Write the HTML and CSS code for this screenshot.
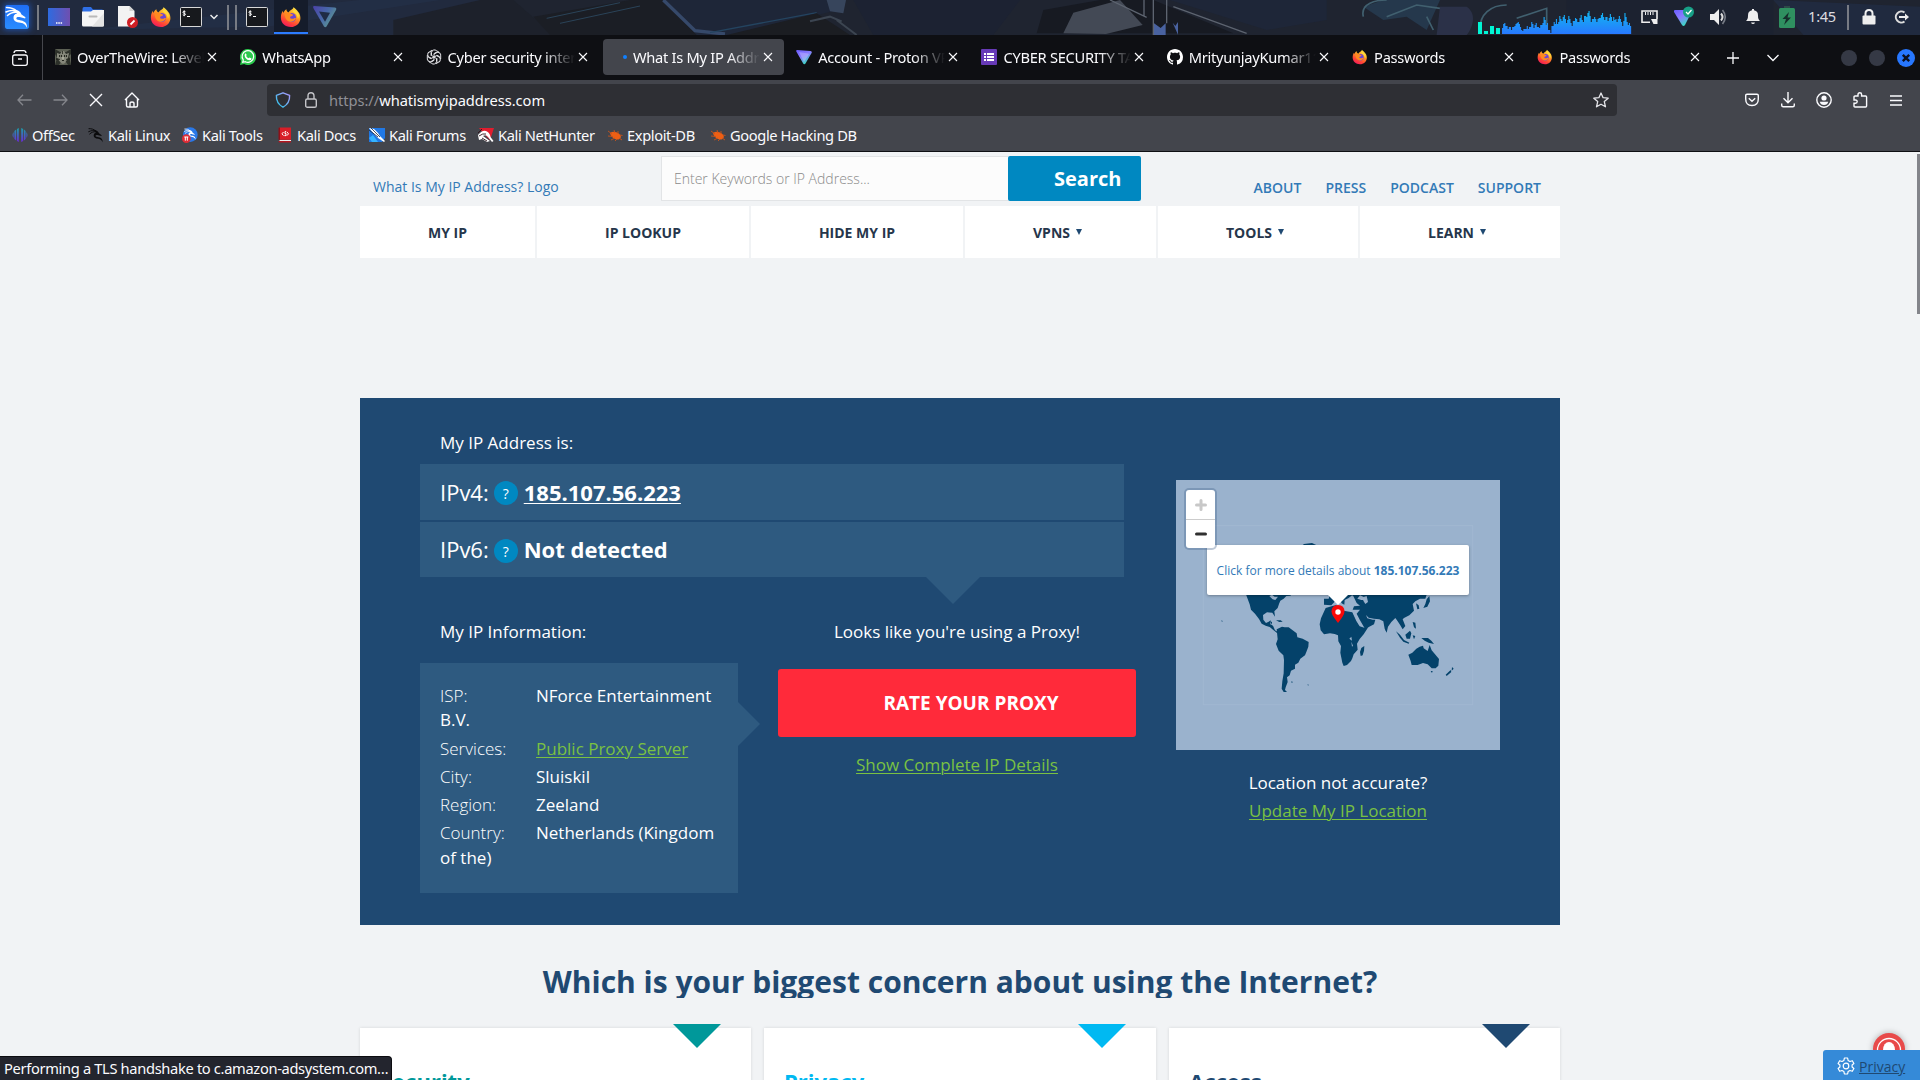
FILE: index.html
```html
<!DOCTYPE html>
<html lang="en">
<head>
<meta charset="utf-8">
<title>What Is My IP Address</title>
<link rel="stylesheet" href="styles.css">
</head>
<body>
<svg class="defs" width="0" height="0" aria-hidden="true">
  <defs>
    <linearGradient id="g-fire" x1="0.8" y1="0" x2="0.3" y2="1"><stop offset="0" stop-color="#fff04a"/><stop offset=".4" stop-color="#ff9a22"/><stop offset=".75" stop-color="#ff4436"/><stop offset="1" stop-color="#f0185e"/></linearGradient>
    <linearGradient id="g-proton" x1="0" y1="0" x2="0.6" y2="1"><stop offset="0" stop-color="#6a5cff"/><stop offset=".5" stop-color="#8a7bff"/><stop offset="1" stop-color="#35e0c0"/></linearGradient>
    <linearGradient id="g-protondim" x1="0" y1="0" x2="1" y2="0.6"><stop offset="0" stop-color="#4b41a8"/><stop offset=".55" stop-color="#4868a8"/><stop offset="1" stop-color="#5f9a90"/></linearGradient>
    <linearGradient id="g-desk" x1="0" y1="0" x2="1" y2="0"><stop offset="0" stop-color="#2e6be0"/><stop offset="1" stop-color="#6f4fb0"/></linearGradient>
    <linearGradient id="g-kali" x1="0" y1="0" x2="0" y2="1"><stop offset="0" stop-color="#1f6ef5"/><stop offset="1" stop-color="#2a8cff"/></linearGradient>
    <linearGradient id="g-shield" x1="0" y1="1" x2="1" y2="0"><stop offset="0" stop-color="#25c8e8"/><stop offset="1" stop-color="#b098ff"/></linearGradient>
    <linearGradient id="g-net" x1="0" y1="0" x2="0" y2="1"><stop offset="0" stop-color="#10b8f0"/><stop offset="1" stop-color="#2878ff"/></linearGradient>
    <linearGradient id="g-off" x1="0" y1="0" x2="0" y2="1"><stop offset="0" stop-color="#1aa0a8"/><stop offset="1" stop-color="#6a28d8"/></linearGradient>
  </defs>
  <symbol id="firefox" viewBox="0 0 24 24">
    <path fill="url(#g-fire)" d="M15 1c1 2 4 3 6 7 4 8-2 15-9 15C5 23 .5 18 1 12c.1-3 1-5 2-6.500l1 2C4.500 5 6 4 7 3.500c0 2 1 3 2.500 3.500C11 4 14 4 15 1z"/>
    <circle cx="12.500" cy="12.500" r="5" fill="#6a45d8"/>
    <path fill="#ff8a20" d="M5 9c2-2 5-2.500 7-.5l2.500 1c-.5 1.600-2 1.500-3 2-1 .8-.5 2.500 1.500 2.500 2 .2 2.500-1 4.500-.8-1 3-3.500 4-5.500 4-4 0-6.500-3-7-8.200z"/>
    <path fill="#ffd83a" d="M16 2c0 3 4 4 4.500 8 .3 2-.5 3-1 4-.5-4-2-6-6-8 1.500-.6 2.300-2 2.500-4z"/>
  </symbol>
  <symbol id="dragon" viewBox="0 0 24 24">
    <path fill="none" stroke="currentColor" stroke-width="1.500" stroke-linecap="round" stroke-linejoin="round" d="M1.500 2.500c4 0 7 .6 10 3.500M1 7c4-2 7-2 10-.8M2.500 10.500c3-3 6-3.500 9-3.300"/>
    <path fill="currentColor" d="M9 4.500c4 .2 6.500 2 7.500 5l4 2.800-.4 1.200-4.600-1.200c-2-.6-4-.4-4.200 1 0 1.600 2 1.700 4.800 2.200 4 .8 6 3 6 7.500-1.300-3-3-4.800-6.700-5.300-4.500-.5-7-1.800-6.900-5C8.600 10.500 9.500 9 12 8.600 11 7 10 6.500 9 4.500z"/>
  </symbol>
  <symbol id="terminal" viewBox="0 0 22 20">
    <rect x=".5" y=".5" width="21" height="19" rx="1" fill="#17191d" stroke="#d8d8d8"/>
    <path d="M5.500 4.800c-.8-.8-2.600-.6-2.600.5 0 1.200 2.600.8 2.600 2 0 1.100-1.900 1.300-2.700.5M4.200 3.400v5.800M7 9.500h3" fill="none" stroke="#fff" stroke-width="1"/>
  </symbol>
  <symbol id="close" viewBox="0 0 10 10"><path d="M1 1l8 8M9 1L1 9" stroke="currentColor" stroke-width="1.100" fill="none"/></symbol>
  <symbol id="beetle" viewBox="0 0 16 16">
    <path fill="#ee5f14" d="M3 6c3-2 8-1.500 10.500 2.500 1 2-.5 4-3 4C7 12.500 4 10 3 6z"/>
    <path d="M1 4l4 3M1 9l5 .5M4 13l4-2M8 14l2-2M7 3l1 3M11 4l0 3M13 8l2.500.5M12 11l3 2" stroke="#c8541a" stroke-width=".9" fill="none"/>
  </symbol>
  <symbol id="proton" viewBox="0 0 16 16">
    <path fill="url(#g-proton)" d="M1.200 1l13.200 1c1.400.1 1.600 1.200 1.200 2L9.500 14.600c-.6 1-1.800 1-2.300 0L.3 2.500C-.1 1.600.3 1 1.200 1z"/>
    <path fill="#d8d4ff" d="M3 3l9 1.500c1 .2 1 1 .6 1.600L8 13 3 3z" opacity=".35"/>
  </symbol>
</svg>

<header class="panel">
  <svg class="wallpaper" viewBox="0 0 5760 105" preserveAspectRatio="none" aria-hidden="true">
    <rect width="5760" height="105" fill="#1f2430"/>
    <path fill="#212a3e" d="M0 0h1500l170 105H0z"/>
    <path fill="#243049" d="M250 90L1080 0h240L800 80z" opacity=".7"/>
    <path fill="#1d212b" d="M1180 60L1440 0h100l120 105h-480z"/>
    <path fill="#1b1e25" d="M1600 50L1890 0h110l110 105h-460z"/>
    <path fill="none" stroke="#2a4358" stroke-width="3" d="M1640 55L1860 8M1680 70l240-52"/>
    <path fill="#1e2638" d="M1990 0h520v30l-280 75h-140z"/>
    <path fill="none" stroke="#36496a" stroke-width="10" d="M1990 0l95 92 90 10"/>
    <path fill="none" stroke="#244460" stroke-width="4" d="M2130 98L2450 38"/>
    <path fill="#1b1d22" d="M2180 105l270-65 100 65z"/>
    <path fill="#37455c" d="M2480 0h58l-8 40-40-6z"/>
    <path fill="none" stroke="#3c4551" stroke-width="6" d="M2430 64l60-14 35 14M2510 60l60 45"/>
    <path fill="#1c2232" d="M2560 0h500l-80 105h-360z"/>
    <path fill="#171a22" d="M3130 30l170-30h160l240 100H3110z"/>
    <path fill="#434955" d="M3200 100l30-62L3370 0l68 75-110 27z" transform="translate(-10 0)"/>
    <path fill="none" stroke="#5d6470" stroke-width="4" d="M3330 0l110 52M3432 0v50M3460 0v105M3500 0v70M3520 20l220 80"/>
    <path fill="#4962a0" d="M3462 70l20 14 15-14v35h-35zM3518 68l8 10 8-12v38z"/>
    <path fill="#1e2638" d="M3510 0h470v60l-180 30z"/>
    <path fill="#25384c" d="M4090 20l60-20h170l-40 90-60-40-70 10z"/>
    <path fill="none" stroke="#41606f" stroke-width="5" d="M4090 50c-10-40 40-50 70-50M4160 50l90-35 70 10M4280 50l20 40M4440 85c0-40 30-70 80-70M4550 55l90-30v50"/>
    <path fill="#2b3148" d="M4320 20h80c30 20 20 60 0 85h-90z"/>
    <path fill="#1c2230" d="M4700 0h620v105H4700z"/>
    <path fill="#202a3f" d="M5320 0l440 20v85h-350z"/>
  </svg>
  <div class="launchers">
    <div class="slot s34"><div class="menu-glow"><svg width="24" height="24"><rect width="24" height="24" rx="2" fill="url(#g-kali)"/><use href="#dragon" color="#fff"/></svg></div></div>
    <div class="slot s8"><i class="rule"></i></div>
    <div class="slot s34"><svg width="22" height="18" viewBox="0 0 22 18"><rect width="22" height="18" fill="url(#g-desk)"/><path d="M8 15h1.500M10.300 15h1.500M12.600 15h1.500" stroke="#fff" stroke-width="1.500"/></svg></div>
    <div class="slot s34"><svg width="22" height="20" viewBox="0 0 22 20"><path fill="#2f6fe6" d="M2 0h7l2 2.500h9.500V8h-20V2Q.5 0 2 0z"/><path fill="#f5f5f5" d="M0 4.500h9L11 3h11v15q0 1.500-1.500 1.500h-19Q0 19.500 0 18z"/><path fill="#e3e3e3" d="M22 6v12q0 1.500-1.500 1.500H10z"/><rect x="6.500" y="8.500" width="9" height="2" rx="1" fill="#b9b9b9"/></svg></div>
    <div class="slot s34"><svg width="22" height="24" viewBox="0 0 22 24"><path fill="#f3f3f3" d="M2 1h11.500l5 5v15.500H2z"/><path fill="#d2d2d2" d="M13.500 1l5 5h-5z"/><circle cx="16.500" cy="17.500" r="5.500" fill="#cf1f25"/><path d="M14.500 19.500l4-4" stroke="#fff" stroke-width="1.800"/></svg></div>
    <div class="slot s34"><svg width="22" height="22"><use href="#firefox"/></svg></div>
    <div class="slot s26"><svg width="22" height="20"><use href="#terminal"/></svg></div>
    <div class="slot s20"><svg width="8" height="6" viewBox="0 0 8 6"><path d="M.5 1L4 4.500 7.500 1" fill="none" stroke="#eee" stroke-width="1.500"/></svg></div>
    <div class="slot s8"><i class="rule"></i></div>
    <div class="slot s8"><i class="rule"></i></div>
    <div class="slot s34"><svg width="22" height="20"><use href="#terminal"/></svg></div>
    <div class="slot s34 running"><svg width="22" height="22"><use href="#firefox"/></svg></div>
    <div class="slot s34"><svg width="24" height="22" viewBox="0 0 24 22"><path fill="url(#g-protondim)" d="M1 0l21 1.500q2 .5 1 2.500L13.500 20.500q-1.200 1.500-2.500 0L.3 2Q-.2.200 1 0z"/><path fill="#1f2c45" d="M6 5.500l11 1.200-5 9z"/></svg></div>
  </div>
  <div class="tray">
    <svg class="load" width="154" height="34" viewBox="114 0 462 102">
      <path fill="#00f5d4" d="M114 66h12v36h-12zM132 93h12v9h-12zM150 78h12v24h-12zM168 84h12v18h-12z"/>
      <path fill="url(#g-net)" transform="translate(186 0) scale(1.123 1) translate(-186 0)" d="M186 102V84h3V72h3v-3h3v9h6v9h3v-6h6v9h3v-9h6v-3h3v-6h3v-3h3v-3h3v6h3v9h3v9h3v3h3v-6h9v-9h3v9h3v-6h6v-15h3v6h3v12h3v-9h3v-6h3v12h6v3h3v-9h6v-6h3V51h3v9h3v15h3v-6h3v21h6v9h3V78h6v-12h3v6h3V57h3v15h3v-6h3V48h3v9h3v6h3V51h3v-6h3v12h3v12h3v-9h3V48h3v9h3v12h3v9h3v-15h6v-9h3v3h3v9h6V54h3v-9h3v15h3v6h3V48h6v3h3V39h3v-6h3v15h3v18h3v-9h6v-6h3v6h3v9h3V57h3v-3h6v-9h3V39h3v12h3v9h3v-9h6v12h3v-9h3V42h3v9h3v12h3V51h3v9h3V57h3v9h3v-9h3V48h3v9h3v9h3v12h3V63h3V39h3v12h3v15h3v9h3v-6h3v9h3v24z"/>
    </svg>
    <div class="slot s34"><svg width="17" height="15" viewBox="0 0 17 15"><path fill="none" stroke="#eee" stroke-width="1.600" d="M9 12.200H1V1h15v8"/><path fill="#eee" d="M10 9h6.500v5h-4zM4 2h1v3H4zM6.500 2h1v3h-1zM9 2h1v3H9zM11.500 2h1v3h-1z"/></svg></div>
    <div class="slot s36"><svg width="22" height="22" viewBox="0 0 22 22"><path fill="url(#g-proton)" d="M2 4h15l1 3-6 12q-1.500 2-3 0L1 6q-.5-2 1-2z"/><circle cx="15.500" cy="6" r="5.500" fill="#17a086"/><path d="M13 6l2 2 3.500-4" fill="none" stroke="#fff" stroke-width="1.200"/></svg></div>
    <div class="slot s34"><svg width="18" height="16" viewBox="0 0 18 16"><path fill="#eee" d="M0 5h4l5-5v16l-5-5H0z"/><path d="M11 4.500q3 3.500 0 7" fill="none" stroke="#ddd" stroke-width="2"/><path d="M12.500 1q5.500 7 0 14" fill="none" stroke="#777c86" stroke-width="1.600"/></svg></div>
    <div class="slot s34"><svg width="14" height="16" viewBox="0 0 14 16"><path fill="#eee" d="M6 0h2v1.200c3 .5 4 2.500 4 5.300 0 3 .5 4 2 5.500H0c1.500-1.500 2-2.500 2-5.500 0-2.800 1-4.800 4-5.300zM5 13.500h4Q8.500 15 7 15t-2-1.500z"/></svg></div>
    <div class="slot s34"><svg width="16" height="22" viewBox="0 0 16 22"><path fill="#2d4a48" d="M5 0h6v3H5z"/><rect y="2" width="16" height="20" rx="1.500" fill="#2f9060"/><path fill="#16302c" d="M10 6l-6.500 7H7l-2 6 7-7.500H8.500z"/></svg></div>
    <div class="clock">1:45</div>
    <div class="slot s16"><i class="rule"></i></div>
    <div class="slot s26"><svg width="14" height="16" viewBox="0 0 14 16"><path d="M3.500 8V4.500q0-3.500 3.500-3.500t3.500 3.500V8" fill="none" stroke="#eee" stroke-width="2"/><rect x=".5" y="6.500" width="13" height="9" rx="1" fill="#eee"/></svg></div>
    <div class="slot s38"><svg width="15" height="14" viewBox="0 0 15 14"><path d="M10.500 2.500a5.500 5.500 0 1 0 0 9" fill="none" stroke="#ddd" stroke-width="2"/><path fill="#eee" d="M5 6h6V3.500L15 7l-4 3.500V8H5z"/></svg></div>
  </div>
</header>

<div class="tabbar">
  <div class="firefox-view"><svg width="16" height="16" viewBox="0 0 16 16" fill="none" stroke="#fbfbfe" stroke-width="1.300"><rect x=".7" y="5" width="14.600" height="10.300" rx="2"/><path d="M2 3q.3-2.300 2.300-2.300h7.400q2 0 2.300 2.300M6 9h4"/></svg></div>
  <div class="tabs">
    <div class="tab"><svg class="fav" width="16" height="16" viewBox="0 0 16 16"><rect width="16" height="16" fill="#5c6054"/><path fill="#2d312a" d="M0 0l5 3h6l5-3v5l-2 2 2 9h-3l-2-3H6l-2 3H0l2-7-2-4z"/><path fill="#85877a" d="M2 4l3 1 2-3h2l2 3 3-1-1 5-3 5-2 1-2-1-4-5z"/><path fill="#252820" d="M4 6h3v2H4zM9 6h3v2H9zM7 11h2v1H7zM7 2h.8v3H7zM1 9l4 1v.8L1 11zM15 9l-4 1v.8l4 .2z"/><path fill="#c9cbb8" d="M5 6.500h1v1H5zM10 6.500h1v1h-1zM7.500 8h1v2.500h-1z"/></svg><span class="label">OverTheWire: Level Goal</span><svg class="x" width="10" height="10"><use href="#close"/></svg></div>
    <div class="tab"><svg class="fav" width="16" height="16" viewBox="0 0 16 16"><path fill="#2bc84d" d="M8 0a8 8 0 1 1-3.800 15L0 16l1-4A8 8 0 0 1 8 0z"/><path fill="none" stroke="#fff" stroke-width="1.200" d="M2.700 13.300l.6-2.300a5.800 5.800 0 1 1 2.100 1.700z"/><path fill="#fff" d="M5.800 4.200l.9 1.900-.6.900q.9 1.700 2.600 2.300l.9-.9 1.900 1q-.2 2-2.200 1.900Q5 10.500 4.600 6.300q.1-1.600 1.200-2.100z"/></svg><span class="label">WhatsApp</span><svg class="x" width="10" height="10"><use href="#close"/></svg></div>
    <div class="tab"><svg class="fav" width="16" height="16" viewBox="-8 -8 16 16" fill="none" stroke="#e4e4e8" stroke-width="1"><g id="knot"><path d="M-2.500-1.500V-4.600A3 3 0 0 1 2.500-6.300L5-4.800M-2.500-1.500L0-.100M-.3-3.200L2.600-4.900"/></g><use href="#knot" transform="rotate(60)"/><use href="#knot" transform="rotate(120)"/><use href="#knot" transform="rotate(180)"/><use href="#knot" transform="rotate(240)"/><use href="#knot" transform="rotate(300)"/></svg><span class="label">Cyber security internship</span><svg class="x" width="10" height="10"><use href="#close"/></svg></div>
    <div class="tab active"><span class="fav loading"></span><span class="label">What Is My IP Address</span><svg class="x" width="10" height="10"><use href="#close"/></svg></div>
    <div class="tab"><svg class="fav" width="16" height="16"><use href="#proton"/></svg><span class="label">Account - Proton VPN</span><svg class="x" width="10" height="10"><use href="#close"/></svg></div>
    <div class="tab"><svg class="fav" width="16" height="16" viewBox="0 0 16 16"><rect width="16" height="16" rx="1" fill="#673ab7"/><path fill="#fff" d="M3 4h2v2H3zM3 7h2v2H3zM3 10h2v2H3zM6 4h7v2H6zM6 7h7v2H6zM6 10h7v2H6z"/></svg><span class="label">CYBER SECURITY TASK</span><svg class="x" width="10" height="10"><use href="#close"/></svg></div>
    <div class="tab"><svg class="fav" width="16" height="16" viewBox="0 0 16 16"><path fill="#fff" d="M8 0C3.580 0 0 3.580 0 8c0 3.540 2.290 6.530 5.470 7.590.4.070.55-.17.55-.38 0-.19-.010-.82-.010-1.490-2.010.37-2.530-.49-2.690-.94-.09-.23-.48-.94-.82-1.130-.28-.15-.68-.52-.010-.53.63-.010 1.080.58 1.230.82.72 1.210 1.870.87 2.330.66.070-.52.28-.87.510-1.070-1.780-.2-3.640-.89-3.640-3.950 0-.87.310-1.590.82-2.150-.08-.2-.36-1.020.08-2.120 0 0 .67-.21 2.200.82.640-.18 1.320-.27 2-.27s1.360.09 2 .27c1.530-1.040 2.200-.82 2.200-.82.44 1.100.16 1.920.08 2.120.51.56.82 1.270.82 2.150 0 3.070-1.870 3.750-3.650 3.950.29.250.54.73.54 1.480 0 1.070-.010 1.930-.010 2.200 0 .21.150.46.55.38A8.010 8.010 0 0 0 16 8c0-4.420-3.580-8-8-8z"/></svg><span class="label">MrityunjayKumar1195</span><svg class="x" width="10" height="10"><use href="#close"/></svg></div>
    <div class="tab"><svg class="fav" width="16" height="16"><use href="#firefox"/></svg><span class="label">Passwords</span><svg class="x" width="10" height="10"><use href="#close"/></svg></div>
    <div class="tab"><svg class="fav" width="16" height="16"><use href="#firefox"/></svg><span class="label">Passwords</span><svg class="x" width="10" height="10"><use href="#close"/></svg></div>
  </div>
  <div class="slot s36"><svg width="12" height="12" viewBox="0 0 12 12"><path d="M6 0v12M0 6h12" stroke="#fbfbfe" stroke-width="1.300"/></svg></div>
  <div class="slot s44"><svg width="12" height="8" viewBox="0 0 12 8"><path d="M.5 1L6 6.500 11.500 1" fill="none" stroke="#fbfbfe" stroke-width="1.300"/></svg></div>
  <div class="window-buttons">
    <i class="dot"></i><i class="dot"></i>
    <svg width="18" height="18" viewBox="0 0 18 18"><circle cx="9" cy="9" r="9" fill="#2777ff"/><path d="M5.800 5.800l6.400 6.400M12.200 5.800l-6.400 6.400" stroke="#0c1020" stroke-width="2.400"/></svg>
  </div>
</div>

<div class="toolbar">
  <div class="nav-left">
    <div class="slot s36 dim"><svg width="15" height="12" viewBox="0 0 15 12"><path d="M6 .8L1 6l5 5.200M1 6h13.500" fill="none" stroke="currentColor" stroke-width="1.300"/></svg></div>
    <div class="slot s36 dim"><svg width="15" height="12" viewBox="0 0 15 12"><path d="M9 .8L14 6l-5 5.200M14 6H.5" fill="none" stroke="currentColor" stroke-width="1.300"/></svg></div>
    <div class="slot s36"><svg width="14" height="14" viewBox="0 0 14 14"><path d="M1 1l12 12M13 1L1 13" stroke="currentColor" stroke-width="1.400"/></svg></div>
    <div class="slot s36"><svg width="16" height="16" viewBox="0 0 16 16" fill="none" stroke="currentColor" stroke-width="1.400" stroke-linejoin="round"><path d="M1 8l7-7 7 7M2.500 7v6.500q0 1.500 1.500 1.500h8q1.500 0 1.500-1.500V7"/><path d="M6 15v-3.500q0-1.500 2-1.500t2 1.500V15"/></svg></div>
  </div>
  <div class="urlbar">
    <svg class="shield" width="16" height="16" viewBox="0 0 16 16"><path d="M8 .8l6.600 2.600q.4 8-6.600 11.800Q1 11.400 1.400 3.400z" fill="none" stroke="url(#g-shield)" stroke-width="1.400" stroke-linejoin="round"/></svg>
    <svg class="lock" width="12" height="16" viewBox="0 0 12 16"><path d="M3 7V4q0-3.300 3-3.300T9 4v3" fill="none" stroke="#c4c4c8" stroke-width="1.400"/><rect x=".7" y="7" width="10.600" height="8.300" rx="1.600" fill="none" stroke="#c4c4c8" stroke-width="1.400"/></svg>
    <span class="url"><span class="scheme">https://</span>whatismyipaddress.com</span>
    <svg class="star" width="16" height="16" viewBox="0 0 16 16"><path d="M8 1l2.100 4.700 5.100.5-3.900 3.400 1.200 5.200L8 12.200l-4.500 2.600 1.200-5.200L.8 6.200l5.100-.5z" fill="none" stroke="#e6e6ea" stroke-width="1.300" stroke-linejoin="round"/></svg>
  </div>
  <div class="nav-right">
    <div class="slot s36"><svg width="14" height="14" viewBox="0 0 14 14" fill="none" stroke="currentColor" stroke-width="1.400"><path d="M2 1.200h10q1.300 0 1.300 1.300V6q0 6.500-6.300 6.500T.7 6V2.500Q.7 1.200 2 1.200z"/><path d="M3.800 5.200L7 8.200l3.200-3"/></svg></div>
    <div class="slot s36"><svg width="14" height="16" viewBox="0 0 14 16" fill="none" stroke="currentColor" stroke-width="1.400"><path d="M7 0v10.500M2.500 6.200L7 10.700l4.500-4.500M.7 11.500v1.700q0 1.500 1.500 1.500h9.600q1.500 0 1.500-1.500v-1.700"/></svg></div>
    <div class="slot s36"><svg width="16" height="16" viewBox="0 0 16 16"><circle cx="8" cy="8" r="7.200" fill="none" stroke="currentColor" stroke-width="1.400"/><circle cx="8" cy="6" r="2.600" fill="currentColor"/><path fill="currentColor" d="M3.800 9.700h8.400Q11.500 13 8 13T3.800 9.700z"/></svg></div>
    <div class="slot s36"><svg width="15" height="16" viewBox="0 0 15 16"><path d="M5 4V2.500Q5 .8 6.800.8t1.800 1.700V4h4q1 0 1 1v9q0 1-1 1H2q-1 0-1-1v-2.800h1.500q1.700 0 1.700-1.600T2.500 8H1V5q0-1 1-1z" fill="none" stroke="currentColor" stroke-width="1.400"/></svg></div>
    <div class="slot s36"><svg width="12" height="11" viewBox="0 0 12 11"><path d="M0 1h12M0 5.500h12M0 10h12" stroke="currentColor" stroke-width="1.300"/></svg></div>
  </div>
</div>

<nav class="bookmarks">
  <a class="bm1"><svg width="16" height="16" viewBox="0 0 16 16"><path fill="url(#g-off)" d="M6.800 1v14L5 14V2zM4.200 2.500v11L2.400 12V4zM1.600 5v6Q-.6 8 1.600 5zM9.200 1v14l2-1V2zM12 2.500v11l1.600-1.500V4zM14.400 5v6q2.200-3 0-6z"/></svg>OffSec</a>
  <a class="bm2"><svg width="16" height="16" color="#0b0b0d"><use href="#dragon"/></svg>Kali Linux</a>
  <a class="bm3"><svg width="16" height="16" viewBox="0 0 24 24"><circle cx="12.500" cy="11.500" r="11" fill="#2a78e8"/><use href="#dragon" color="#fff" x="3" y="1" width="19" height="19"/><circle cx="6.500" cy="17.500" r="6.500" fill="#e02c35"/><path d="M3.500 15h6M5 15v5.500M8 15v5.500" stroke="#fff" stroke-width="1.500"/></svg>Kali Tools</a>
  <a class="bm4"><svg width="16" height="16" viewBox="0 0 16 16"><path fill="#d81e28" d="M2.500.5H14v12.300H2.500z"/><path fill="#8d1018" d="M1.500 1.500q0-1 1.500-1v12.300H1.500z"/><path fill="#eee" d="M2.500 13H14v1H2.500z"/><path fill="#b3161f" d="M1.500 14H14v1.600H2.500q-1 0-1-1.600z"/><path d="M6.500 5L5 6.800l1.500 1.800M10 5l1.500 1.800L10 8.600M9.200 4.600H8v2h1v2H7.400" fill="none" stroke="#fff"/></svg>Kali Docs</a>
  <a class="bm5"><svg width="16" height="16" viewBox="0 0 16 16"><path fill="#2178e4" d="M0 1h16v10l-3 4H0z"/><path fill="#fff" d="M0 1l5 1 4 4 2 3 5 5-1 1-6-4-4-4z"/><path d="M2 1l9 9M0 3l9 7" stroke="#15243a" stroke-width=".8"/><path fill="#34b3ff" d="M0 11l4-3 5 7H3z"/></svg>Kali Forums</a>
  <a class="bm6"><svg width="16" height="16" viewBox="0 0 16 16"><path fill="#e11d2e" d="M1 1h15L12 13 8 9z"/><path fill="#fff" d="M0 8q5-6 9-3.500Q12 6 12.500 10l3 4-1.500 1-4-5Q8 7 5 9l7 5-3 1-5-3-3 1z"/><path d="M0 6l4-4M1 9q4-3 7-2M4 11l5 3" stroke="#30121a" stroke-width=".9" fill="none"/></svg>Kali NetHunter</a>
  <a class="bm7"><svg width="16" height="16"><use href="#beetle"/></svg>Exploit-DB</a>
  <a class="bm8"><svg width="16" height="16"><use href="#beetle"/></svg>Google Hacking DB</a>
</nav>

<main class="page">
  <div class="scroll-thumb"></div>
  <div class="wrap">
    <div class="masthead">
      <a class="logo">What Is My IP Address? Logo</a>
      <div class="search"><div class="field">Enter Keywords or IP Address...</div><div class="go">Search</div></div>
      <div class="toplinks"><a>ABOUT</a><a>PRESS</a><a>PODCAST</a><a>SUPPORT</a></div>
    </div>
    <nav class="mainnav">
      <a>MY IP</a><a>IP LOOKUP</a><a>HIDE MY IP</a><a>VPNS<i></i></a><a>TOOLS<i></i></a><a>LEARN<i></i></a>
    </nav>

    <section class="hero">
      <div class="details">
        <p class="caption">My IP Address is:</p>
        <div class="iprow"><span class="ver">IPv4:</span><span class="q">?</span><b class="link">185.107.56.223</b></div>
        <div class="iprow second"><span class="ver">IPv6:</span><span class="q">?</span><b>Not detected</b></div>
        <div class="columns">
          <div class="info">
            <p class="caption">My IP Information:</p>
            <div class="infobox">
              <p><span>ISP:</span>NForce Entertainment B.V.</p>
              <p><span>Services:</span><a>Public Proxy Server</a></p>
              <p><span>City:</span>Sluiskil</p>
              <p><span>Region:</span>Zeeland</p>
              <p><span>Country:</span>Netherlands (Kingdom of the)</p>
            </div>
          </div>
          <div class="proxy">
            <p>Looks like you're using a Proxy!</p>
            <div class="rate">RATE YOUR PROXY</div>
            <a>Show Complete IP Details</a>
          </div>
        </div>
      </div>
      <div class="location">
        <div class="map">
          <svg width="324" height="270" viewBox="48 60 972 810">
            <rect x="130" y="197" width="808" height="537" fill="none" stroke="#a1b8d1" stroke-width="3"/>
            <g fill="#04426a">
              <path d="M420 262l12-10 24-3 14 7 4 20h-50z"/>
              <path d="M255 395h150l-14 12-12 1-8 8-10 6-4 10-4 12-10 10 2 16-8-12-16-1-12 8 1 14 8 10 8-4 6-4-1 12 8 4 6 14 10 6-4 2-12-10-10-8-12-4-12-6-8-14-12-16-12-12-4-16z"/>
              <path d="M350 508l16-8 8 2 12 0 14 10 10 8 2 12 16 4 18 10-1 14-6 16-4 10-14 10-6 12-10 6 0 12-12 6-4 14-8 6 2 14-6 16-2 8 6 6-10 0-6-10 2-22 4-24 1-40-2-14-14-14-8-20 5-14z"/>
              <path d="M497 444l20-6 12-3 6 12 20 6 22 4 12 26 10 16 14 4 12-2-14 22-12 14-8 14 2 18-12 14-4 12-4 8-12 12-10 3-4-10-6-30 2-20-8-14-1-18-10-4-14-2-18 3-10-12-3-18 4-18z"/>
              <path d="M613 558l-1 14-4 14-6 2-2-12 4-12z"/>
              <path d="M492 434v-18h14l4-14-2-8h94l-14 16-12-4-10 8-12 6-1 14-8-4-6-12-10 0-8 10-7 8z"/>
              <path d="M578 404h222l-4 12-16 0-14 8-8 8 4 20-14 14-16 8-4 4 8 20-8 10-8-14-8-12-6-8-12 12-10 14-4 18-6-12-4-22-12-6-16-2-16-3-8-8 4 10 16 4 8 0-4 14-20 10-8 2-14-24-10-20 10-12-22 0 4-10 18-2-10-8z"/>
              <path d="M768 430l8 6 2 10-6 2zM790 444l12-4 8-16-2-16-8 10-4 14zM758 486l8 2 2 18-6-4zM708 514l12 10 12 16 16 8-2 3-16-6-10-12zM736 524l14-12 4 8-4 16-10 0zM758 526l8 2-4 10zM784 534l20 0 10 8 8 10-16-4-12-6zM676 505l4 4-2 5z"/>
              <path d="M745 584l12-6 12-12 10-6 10-3 2 8 12 8 6-18 6 16 12 14 10 12-2 20-8 8-12 0-12-12-14-4-16 6-18 0-3-12z"/>
              <path d="M812 633l6 0-2 6zM876 621l5 5-6 6zM872 630l2 6-14 12-3-4z"/>
              <path d="M330 484l6 2 0 8zM348 481l14 0 6 4-10 1zM184 481l4 2-2 3zM394 664l5 2-4 3zM443 673l5 3-5 0z"/>
            </g>
            <g fill="#9ab2cd"><path d="M328 408l8-4 8 6 10 0-8 10-8-2zM592 416l8-10 10 4 6 10-12 0zM608 412l12-4 4 18-8 6-6-10zM568 536l6-6 2 12zM574 545l5 12-3 3zM576 452l6 0 20 42-4 2zM556 422l6-4 4 16-4 8z"/></g>
          </svg>
          <div class="popup">Click for more details about <b>185.107.56.223</b></div>
          <svg class="pin" width="14" height="18" viewBox="0 0 14 18"><path fill="#f80808" d="M7 0q6.500.3 6.500 6.500Q13.500 10 7 18 .5 10 .5 6.500.5.300 7 0z"/><circle cx="7" cy="7" r="2.700" fill="#fff"/></svg>
          <div class="zoomctl">
            <div><svg width="12" height="12" viewBox="0 0 12 12"><path d="M6 1.500v9M1.500 6h9" stroke="#c8c8c8" stroke-width="3" stroke-linecap="round"/></svg></div>
            <div><svg width="12" height="12" viewBox="0 0 12 12"><path d="M1.500 6h9" stroke="#303030" stroke-width="3" stroke-linecap="round"/></svg></div>
          </div>
        </div>
        <p>Location not accurate?</p>
        <a>Update My IP Location</a>
      </div>
    </section>

    <h2>Which is your biggest concern about using the Internet?</h2>
    <section class="cards">
      <article class="security">Security</article>
      <article class="privacy">Privacy</article>
      <article class="access">Access</article>
    </section>
  </div>
</main>

<div class="status">Performing a TLS handshake to c.amazon-adsystem.com…</div>
<svg class="widget" width="44" height="52" viewBox="0 0 44 52"><circle cx="22" cy="22" r="16" fill="#e84a4a"/><circle cx="22" cy="23" r="11.500" fill="none" stroke="#fff" stroke-width="1.300"/><ellipse cx="22" cy="23" rx="6" ry="8" fill="#fff"/></svg>
<div class="privacy-tab"><svg width="18" height="18" viewBox="0 0 18 18" fill="none" stroke="#fff" stroke-width="1.200" stroke-linejoin="round"><path d="M7.400 1h3.200l.5 2.400 1.900 1.100 2.300-.8 1.600 2.800L15.100 8v2l1.800 1.500-1.600 2.800-2.300-.8-1.900 1.100-.5 2.400H7.400l-.5-2.400L5 13.500l-2.300.8-1.600-2.800L2.900 10V8L1.100 6.500l1.600-2.800 2.300.8 1.900-1.100z"/><circle cx="9" cy="9" r="2.800"/></svg><span>Privacy</span></div>
</body>
</html>
```
FILE: styles.css
```css
* { box-sizing: border-box; }
body {
  margin: 0;
  width: 1920px;
  height: 1080px;
  overflow: hidden;
  display: flex;
  flex-direction: column;
  background: #f1f3f5;
  font-family: "Noto Sans", sans-serif;
  font-size: 14.67px;
  color: #fbfbfe;
}
p, h2 { margin: 0; }
svg { display: block; flex: none; }
.defs { position: absolute; }

.slot { display: flex; align-items: center; justify-content: center; flex: none; height: 100%; }
.s8 { width: 8px; }
.s16 { width: 16px; }
.s20 { width: 20px; }
.s26 { width: 26px; }
.s34 { width: 34px; }
.s36 { width: 36px; }
.s38 { width: 38px; }
.s44 { width: 44px; }

/* desktop panel */
.panel { position: relative; flex: none; height: 35px; padding-bottom: 1px; display: flex; justify-content: space-between; background: #1f2430; }
.wallpaper { position: absolute; inset: 0; width: 1920px; height: 35px; }
.launchers, .tray { position: relative; display: flex; height: 34px; }
.menu-glow { box-shadow: 0 0 6px 1px #2050a8; }
.rule { width: 2px; height: 25px; background: #777b84; }
.running { background: #151c2b; box-shadow: inset 0 -2px #2c7cff; }
.clock { width: 36px; text-align: center; line-height: 33px; color: #dcdce0; font-size: 14.67px; letter-spacing: -0.3px; }

/* tab strip */
.tabbar { flex: none; height: 45px; display: flex; background: #0e0f13; }
.firefox-view { width: 43px; flex: none; display: flex; align-items: center; padding-left: 12px; border-right: 1px solid #46474d; }
.tabs { display: flex; flex: none; width: 1672px; padding: 4px 0 5px 2px; }
.tab { flex: none; width: 181.300px; margin: 0 2px; display: flex; align-items: center; padding: 0 11px 0 8px; border-radius: 4px; }
.tab.active { background: #43454c; }
.fav { width: 16px; flex: none; margin-right: 6px; }
.loading { height: 16px; display: flex; align-items: center; justify-content: flex-end; }
.loading::after { content: ""; width: 4px; height: 4px; border-radius: 50%; background: #1080ff; }
.tab.active .fav { margin-left: 2px; margin-right: 4px; padding-right: 2px; }
.label { flex: 1; min-width: 0; overflow: hidden; white-space: nowrap; line-height: 22px; margin-right: 3px; letter-spacing: -0.28px; -webkit-mask-image: linear-gradient(to right, #000 calc(100% - 32px), transparent); mask-image: linear-gradient(to right, #000 calc(100% - 32px), transparent); }
.window-buttons { display: flex; align-items: center; gap: 12px; margin-left: auto; padding-right: 5px; }
.dot { width: 16px; height: 16px; border-radius: 50%; background: #353945; }

/* navigation toolbar */
.toolbar { flex: none; height: 40px; display: flex; padding-left: 6px; background: #43454c; }
.nav-left { display: flex; width: 261px; flex: none; }
.dim { color: #85868c; }
.urlbar { display: flex; align-items: center; width: 1350px; height: 32px; margin-top: 4px; padding: 0 8px; border-radius: 4px; background: #2e2f34; }
.lock { margin: 0 12px 0 14px; }
.scheme { color: #909096; }
.url { flex: 1; letter-spacing: -0.04px; }
.nav-right { display: flex; margin-left: 117px; }
.bookmarks { flex: none; height: 32px; display: flex; padding: 0 0 0 12px; background: #43454c; border-bottom: 1px solid #0e0f13; letter-spacing: -0.38px; }
.bookmarks a { display: flex; gap: 4px; align-items: center; flex: none; height: 30px; }
.bm1 { width: 76px; }
.bm2 { width: 94px; }
.bm3 { width: 95px; }
.bm4 { width: 92px; }
.bm5 { width: 109px; }
.bm6 { width: 129px; }
.bm7 { width: 103px; }

/* web page */
.page { position: relative; height: 928px; overflow: hidden; font-family: "Open Sans", sans-serif; color: #fff; }
.scroll-thumb { position: absolute; right: 0; top: 2px; width: 3px; height: 160px; background: #83848a; }
.wrap { width: 1200px; margin: 0 auto; }
.masthead { display: flex; height: 54px; color: #337ab7; font-size: 14px; }
.logo { width: 301px; padding: 25px 0 0 13px; line-height: 20px; }
.search { display: flex; width: 480px; height: 45px; margin-top: 4px; }
.field { width: 347px; padding-left: 12px; line-height: 43px; background: #fcfcfc; border: 1px solid #e2e4e6; border-right: 0; color: #8a8a8a; font-weight: 300; }
.go { width: 133px; padding-left: 46px; line-height: 45px; border-radius: 2px; background: #0088c1; color: #fff; font-size: 20px; font-weight: 700; }
.toplinks { display: flex; gap: 24px; margin-left: auto; padding: 26px 19px 0 0; line-height: 20px; font-weight: 600; }
.mainnav { display: grid; grid-template-columns: 175px 212px 212px 191px 200px 200px; gap: 2px; height: 52px; }
.mainnav a { display: flex; align-items: center; justify-content: center; background: #fff; color: #26364b; font-size: 14px; font-weight: 700; }
.mainnav i { margin: 0 6px; border: 3px solid transparent; border-top: 6px solid #1f4972; border-bottom: 0; }

.hero { display: flex; height: 527px; margin-top: 140px; padding-left: 60px; background: #1f4972; font-size: 17px; line-height: 24.290px; }
.details { width: 716px; }
.caption { padding-left: 20px; }
.details > .caption { padding-top: 33px; height: 66px; }
.iprow { display: flex; align-items: center; width: 704px; height: 56px; padding-left: 20px; background: #2e5a80; font-size: 22px; }
.iprow.second { position: relative; height: 55px; margin-top: 2px; }
.iprow.second::after { content: ""; position: absolute; left: 506px; top: 55px; border: 27px solid transparent; border-top-color: #2e5a80; border-bottom: 0; }
.q { width: 24px; height: 24px; margin: 2px 6px 0 5px; border-radius: 50%; background: #0088c1; font-size: 14px; line-height: 25px; text-align: center; }
.link, .hero a { text-decoration: underline; text-underline-offset: 2px; text-decoration-thickness: 1px; }
.hero a { color: #7ac142; }
.columns { display: flex; }
.info { width: 358px; }
.info .caption { padding-top: 43px; height: 86px; }
.infobox { position: relative; width: 318px; height: 230px; padding: 21px 20px 0; background: #2e5a80; }
.infobox::after { content: ""; position: absolute; left: 318px; top: 39px; border: 22px solid transparent; border-left-color: #2e5a80; border-right: 0; }
.infobox p { margin-bottom: 4px; }
.infobox span { display: inline-block; width: 96px; font-weight: 300; }
.proxy { width: 358px; padding-top: 43px; text-align: center; }
.rate { height: 68px; margin: 25px 0 16px; padding-left: 28px; border-radius: 3px; background: #ff2a3a; font-size: 19px; font-weight: 700; line-height: 68px; }
.location { width: 324px; margin-left: 40px; padding-top: 82px; text-align: center; }
.map { position: relative; height: 270px; margin-bottom: 21px; background: #9ab2cd; }
.location p { margin-bottom: 4px; }
.popup { position: absolute; left: 31px; top: 65px; width: 262px; height: 50px; border-radius: 2px; background: #fff; box-shadow: 0 1px 3px rgba(0, 0, 0, .3); color: #337ab7; font-size: 12px; line-height: 51px; white-space: nowrap; }
.popup::after { content: ""; position: absolute; left: 121px; top: 50px; border: 10px solid transparent; border-top-color: #fff; border-bottom: 0; }
.pin { position: absolute; left: 155px; top: 125px; }
.zoomctl { position: absolute; left: 10px; top: 10px; width: 29px; border-radius: 3px; background: #fff; box-shadow: 0 0 0 2px rgba(70, 100, 140, .35); }
.zoomctl div { display: flex; align-items: center; justify-content: center; height: 29px; }
.zoomctl div + div { border-top: 1px solid #ccc; }

h2 { height: 48px; margin-top: 25px; overflow: hidden; color: #1f4972; font-size: 30px; font-weight: 700; line-height: 64px; text-align: center; }
.cards { display: grid; grid-template-columns: 391px 392px 391px; gap: 13px; margin-top: 30px; }
.cards article { position: relative; height: 60px; padding: 33px 20px; background: #fff; box-shadow: 0 0 3px rgba(0, 0, 0, .12); font-size: 22px; font-weight: 700; line-height: 40px; }
.cards article::after { content: ""; position: absolute; right: 30px; top: -4px; border: 24px solid transparent; border-top-color: currentColor; border-bottom: 0; }
.security { color: #00989a; }
.privacy { color: #00b9f2; }
.access { color: #1f4972; }

/* overlays */
.status { position: absolute; left: 0; bottom: 0; width: 392px; height: 24px; padding-left: 4px; border: solid #0c0c10; border-width: 1px 1px 0 0; border-radius: 0 4px 0 0; background: #23252e; line-height: 23px; white-space: nowrap; letter-spacing: -0.33px; }
.widget { position: absolute; left: 1867px; top: 1027px; filter: drop-shadow(0 0 3px rgba(0, 0, 0, .3)); }
.privacy-tab { position: absolute; right: 0; bottom: 0; width: 97px; height: 30px; display: flex; align-items: center; gap: 4px; padding: 2px 0 0 14px; border-radius: 3px 0 0 0; background: #358ad8; color: #1f4972; font-family: "Open Sans", sans-serif; font-size: 14px; }
.privacy-tab span { text-decoration: underline; }
```
